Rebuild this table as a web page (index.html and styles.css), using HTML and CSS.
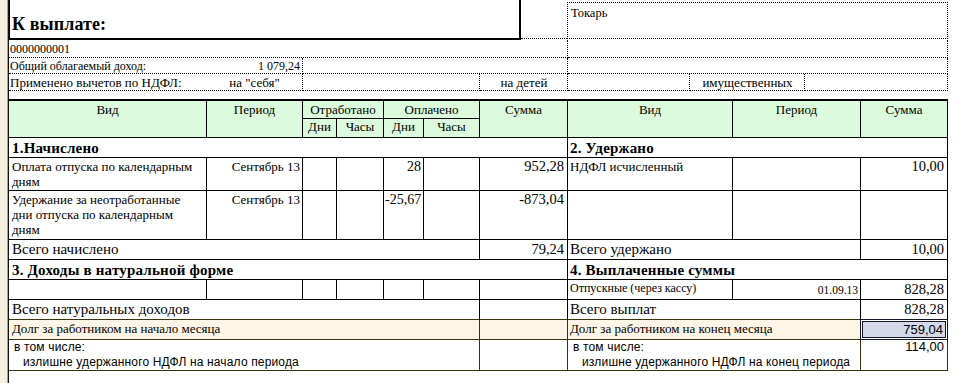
FILE: index.html
```html
<!DOCTYPE html>
<html lang="ru">
<head>
<meta charset="utf-8">
<title>Расчетный листок</title>
<link rel="stylesheet" href="styles.css">
</head>
<body>
<div class="page">
  <div class="strip"></div>
  <div class="sheet">
    <div class="top">
      <div class="kbox">К выплате:</div>
      <div class="tgap"></div>
      <div class="pos">Токарь</div>
    </div>
    <div class="info">
      <div class="span3 rb">0000000001</div>
      <div class="span3 rb"></div>
      <div class="rc split"><span>Общий облагаемый доход:</span><span>1 079,24</span></div>
      <div class="span2 rc"></div>
      <div class="span3 rc"></div>
      <div class="rd split"><span class="lbl">Применено вычетов по НДФЛ:</span><span class="ctr">на "себя"</span></div>
      <div class="rd"></div>
      <div class="rd ctr">на детей</div>
      <div class="rd"></div>
      <div class="rd ctr">имущественных</div>
      <div class="rd"></div>
    </div>
    <div class="grid">
      <div class="hd rs2">Вид</div>
      <div class="hd rs2">Период</div>
      <div class="hd span2">Отработано</div>
      <div class="hd span2">Оплачено</div>
      <div class="hd rs2">Сумма</div>
      <div class="hd rs2">Вид</div>
      <div class="hd rs2">Период</div>
      <div class="hd rs2">Сумма</div>
      <div class="hd h2">Дни</div>
      <div class="hd h2">Часы</div>
      <div class="hd h2">Дни</div>
      <div class="hd h2">Часы</div>

      <div class="sec span7">1.Начислено</div>
      <div class="sec span3 rt">2. Удержано</div>

      <div class="txt">Оплата отпуска по календарным дням</div>
      <div class="per">Сентябрь 13</div>
      <div></div>
      <div></div>
      <div class="num">28</div>
      <div></div>
      <div class="sum">952,28</div>
      <div class="txt rt">НДФЛ исчисленный</div>
      <div></div>
      <div class="sum">10,00</div>

      <div class="txt">Удержание за неотработанные дни отпуска по календарным дням</div>
      <div class="per">Сентябрь 13</div>
      <div></div>
      <div></div>
      <div class="num neg">-25,67</div>
      <div></div>
      <div class="sum">-873,04</div>
      <div></div>
      <div></div>
      <div></div>

      <div class="tot span6">Всего начислено</div>
      <div class="sum tot">79,24</div>
      <div class="tot span2 rt">Всего удержано</div>
      <div class="sum tot">10,00</div>

      <div class="sec span7">3. Доходы в натуральной форме</div>
      <div class="sec span3 rt">4. Выплаченные суммы</div>

      <div></div>
      <div></div>
      <div></div>
      <div></div>
      <div></div>
      <div></div>
      <div></div>
      <div class="small rt">Отпускные (через кассу)</div>
      <div class="per date">01.09.13</div>
      <div class="sum tot">828,28</div>

      <div class="tot span6 bb">Всего натуральных доходов</div>
      <div class="bb"></div>
      <div class="tot span2 rt bb">Всего выплат</div>
      <div class="sum tot bb">828,28</div>

      <div class="debt span6">Долг за работником на начало месяца</div>
      <div class="debt"></div>
      <div class="debt span2 rt">Долг за работником на конец месяца</div>
      <div class="sel">759,04</div>

      <div class="note span6"><span>в том числе:</span><span class="ind">излишне удержанного НДФЛ на начало периода</span></div>
      <div class="note"></div>
      <div class="note span2 rt"><span>в том числе:</span><span class="ind">излишне удержанного НДФЛ на конец периода</span></div>
      <div class="note nsum">114,00</div>
    </div>
  </div>
</div>
</body>
</html>
```

FILE: styles.css
```css
* {
  box-sizing: border-box;
  margin: 0;
  padding: 0;
}

html, body {
  background: #fff;
}

body {
  width: 964px;
  height: 383px;
  overflow: hidden;
  font-family: "Liberation Serif", "Times New Roman", serif;
  color: #000;
}

.page {
  display: flex;
  height: 383px;
}

.strip {
  flex: none;
  width: 8px;
  background: #f3eedd;
  border-right: 1px solid #aaa38a;
}

.sheet {
  flex: none;
  width: 940px;
  border-left: 1px solid #111;
}

/* top block */
.top {
  display: flex;
  align-items: flex-start;
  height: 40px;
}

.kbox {
  flex: none;
  width: 512px;
  height: 40px;
  border-left: 1px solid #000;
  border-right: 2px solid #000;
  border-bottom: 2px solid #000;
  padding: 14px 0 0 2px;
  font-size: 18px;
  font-weight: bold;
  line-height: 20px;
  letter-spacing: 0.1px;
}

.tgap {
  flex: none;
  width: 46px;
  height: 39px;
  border-bottom: 1px dotted #000;
}

.pos {
  flex: none;
  width: 381px;
  height: 37px;
  margin-top: 2px;
  border: 1px dotted #000;
  padding: 3px 0 0 3px;
  font-size: 12.5px;
  line-height: 14px;
}

.info {
  display: grid;
  grid-template-columns: 294px 177px 88px 122px 115px 143px;
  grid-template-rows: 18px 16px 17px;
  margin-bottom: 8px;
  font-size: 12px;
  line-height: 15px;
}

.info > div {
  border-right: 1px dotted #000;
  border-bottom: 1px dotted #000;
  white-space: nowrap;
}

.info .rb {
  padding: 2px 0 0 1px;
}

.info .rc {
  padding: 1px 2px 0 1px;
}

.info .rd {
  padding: 1px 0 0 1px;
  font-size: 13px;
}

.info .split {
  display: flex;
  justify-content: space-between;
}

.info .lbl {
  width: 197px;
}

.info .ctr {
  flex: 1;
  text-align: center;
}

.info > .ctr {
  text-align: center;
}

.span2 { grid-column: span 2; }
.span3 { grid-column: span 3; }
.span6 { grid-column: span 6; }
.span7 { grid-column: span 7; }
.rs2 { grid-row: span 2; }

/* main grid */
.grid {
  display: grid;
  grid-template-columns: 198px 96px 34px 47px 40px 56px 88px 165px 128px 87px;
  grid-template-rows: 18px 19px 20px 33px 49px 20px 20px 20px 20px 20px 31px;
  border-top: 2px solid #000;
  font-size: 13px;
  line-height: 15px;
}

.grid > div {
  border-right: 1px solid #000;
  border-bottom: 1px solid #000;
  padding: 1px 3px 0 3px;
  overflow: hidden;
  white-space: nowrap;
}

.grid > .hd {
  background: #dcfadc;
  text-align: center;
  padding: 1px 0 0;
}

.grid > .h2 {
  padding-top: 0;
}

.grid > .txt {
  white-space: normal;
}

.grid > .rt {
  padding-left: 2px;
}

.grid > .per {
  text-align: right;
  padding-right: 2px;
}

.grid > .num {
  text-align: right;
  padding-right: 2px;
  font-size: 14px;
}

.grid > .neg {
  text-align: left;
  padding-left: 1px;
  padding-right: 0;
}

.grid > .sum {
  text-align: right;
  padding-right: 3px;
  font-size: 14.5px;
}

.grid > .sec {
  font-size: 15px;
  font-weight: bold;
  line-height: 16px;
  padding-top: 2px;
  letter-spacing: 0.2px;
}

.grid > .tot {
  font-size: 15px;
  line-height: 16px;
  padding-top: 1px;
}

.grid > .sum.tot {
  font-size: 14.5px;
}

.grid > .small {
  font-size: 12px;
  line-height: 14px;
  padding-top: 1px;
}

.grid > .date {
  font-size: 11.5px;
  line-height: 14px;
  padding-top: 3px;
}

.grid > .bb {
  border-bottom-color: #3b3210;
}

.grid > .debt {
  background: #fdf5e6;
  font-size: 13px;
  line-height: 15px;
  padding-top: 1px;
  border-color: #3b3210;
}

.grid > .sel {
  margin: -1px 0 0 -1px;
  border: 1px solid #14142a;
  box-shadow: inset 0 0 0 1px #fff, inset 0 0 0 2px #14142a;
  background: #d4d8e8;
  font-family: "Liberation Sans", Arial, sans-serif;
  font-size: 13px;
  line-height: 15px;
  text-align: right;
  padding: 2px 4px 0 0;
}

.grid > .note {
  display: flex;
  flex-direction: column;
  font-family: "Liberation Sans", Arial, sans-serif;
  font-size: 12px;
  line-height: 15px;
  letter-spacing: 0.15px;
  padding: 0 0 0 5px;
  border-color: #3b3210;
}

.grid > .note.rt {
  padding-left: 5px;
}

.note .ind {
  padding-left: 9px;
}

.grid > .nsum {
  text-align: right;
  padding-right: 3px;
  font-size: 13px;
  line-height: 14px;
  letter-spacing: 0;
}
```
